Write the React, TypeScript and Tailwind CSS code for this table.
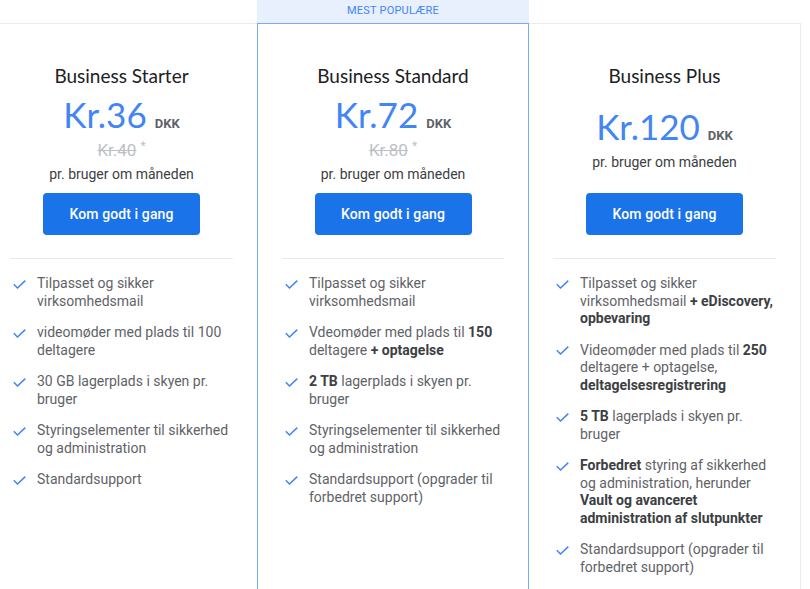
import React from 'react';

interface Feature {
  parts: { text: string; bold?: boolean }[];
}

interface Plan {
  name: string;
  price: string;
  oldPrice?: string;
  popular?: boolean;
  features: Feature[];
}

const f = (...parts: (string | [string])[]): Feature => ({
  parts: parts.map((p) => (typeof p === 'string' ? { text: p } : { text: p[0], bold: true })),
});

const plans: Plan[] = [
  {
    name: 'Business Starter',
    price: 'Kr.36',
    oldPrice: 'Kr.40',
    features: [
      f('Tilpasset og sikker virksomhedsmail'),
      f('videomøder med plads til 100 deltagere'),
      f('30 GB lagerplads i skyen pr. bruger'),
      f('Styringselementer til sikkerhed og administration'),
      f('Standardsupport'),
    ],
  },
  {
    name: 'Business Standard',
    price: 'Kr.72',
    oldPrice: 'Kr.80',
    popular: true,
    features: [
      f('Tilpasset og sikker virksomhedsmail'),
      f('Vdeomøder med plads til ', ['150'], ' deltagere ', ['+ optagelse']),
      f(['2 TB'], ' lagerplads i skyen pr. bruger'),
      f('Styringselementer til sikkerhed og administration'),
      f('Standardsupport (opgrader til forbedret support)'),
    ],
  },
  {
    name: 'Business Plus',
    price: 'Kr.120',
    features: [
      f('Tilpasset og sikker virksomhedsmail ', ['+ eDiscovery, opbevaring']),
      f('Videomøder med plads til ', ['250'], ' deltagere + optagelse, ', ['deltagelsesregistrering']),
      f(['5 TB'], ' lagerplads i skyen pr. bruger'),
      f(
        ['Forbedret'],
        ' styring af sikkerhed og administration, herunder ',
        ['Vault og avanceret administration af slutpunkter']
      ),
      f('Standardsupport (opgrader til forbedret support)'),
    ],
  },
];

const Check = () => (
  <svg width="13" height="9" viewBox="0 0 13 9" className="shrink-0 mt-[4.5px]">
    <polyline points="0.8,4.3 4.5,8 12.3,0.6" fill="none" stroke="#4285f4" strokeWidth="1.5" />
  </svg>
);

const heading = { fontFamily: 'Lato, "Open Sans", sans-serif' };

const PlanCard: React.FC<{ plan: Plan; index: number }> = ({ plan, index }) => {
  const border = plan.popular
    ? 'border border-[#7baaf7]'
    : index === 0
    ? 'border-t border-l border-[#ebebeb]'
    : 'border-t border-r border-[#ebebeb]';

  return (
    <div className="w-[272px] shrink-0 flex flex-col">
      <div
        className={`h-[23px] flex items-center justify-center text-[11px] tracking-[0.2px] uppercase ${
          plan.popular ? 'bg-[#e8f0fe] text-[#4285f4]' : ''
        }`}
      >
        {plan.popular ? 'Mest populære' : ''}
      </div>
      <div className={`flex-1 bg-white ${border}`}>
        <div className="pt-[38px] px-6 flex flex-col items-center">
          <h2 className="text-[19px] leading-[28px] font-normal text-[#202124]" style={heading}>
            {plan.name}
          </h2>
          <div className="h-[95px] flex flex-col items-center justify-center">
            <div className="flex items-baseline h-[44px]">
              <span className="text-[35px] leading-[44px] font-normal text-[#4285f4]" style={heading}>
                {plan.price}
              </span>
              <span className="ml-2 text-[13px] font-bold text-[#5f6368]">DKK</span>
            </div>
            {plan.oldPrice && (
              <div className="mt-1 text-[17px] leading-[20px] text-[#bdc1c6]">
                <span className="line-through">{plan.oldPrice}</span>
                <sup className="ml-1 text-[12px]">*</sup>
              </div>
            )}
            <div className="mt-1 text-[14px] leading-[20px] text-[#3c4043]">pr. bruger om måneden</div>
          </div>
          <button className="mt-2 w-[157px] h-[42px] rounded bg-[#1a73e8] text-white text-[14px] font-medium tracking-[0.1px]">
            Kom godt i gang
          </button>
        </div>
        <div className="mx-6 mt-[23px] border-t border-[#e8eaed]" />
        <ul className="pt-4 pl-[27px] pr-6 flex flex-col gap-[14px]">
          {plan.features.map((feat, i) => (
            <li key={i} className="flex gap-[11px]">
              <Check />
              <p className="text-[14px] leading-[17.5px] text-[#5f6368]">
                {feat.parts.map((p, j) =>
                  p.bold ? (
                    <span key={j} className="font-bold text-[#3c4043]">
                      {p.text}
                    </span>
                  ) : (
                    <span key={j}>{p.text}</span>
                  )
                )}
              </p>
            </li>
          ))}
        </ul>
      </div>
    </div>
  );
};

export default function App() {
  return (
    <div className="w-full h-[589px] overflow-hidden bg-white" style={{ fontFamily: 'Roboto, "Liberation Sans", sans-serif' }}>
      <div className="flex -ml-[15px] h-[700px]">
        {plans.map((plan, i) => (
          <PlanCard key={plan.name} plan={plan} index={i} />
        ))}
      </div>
    </div>
  );
}
